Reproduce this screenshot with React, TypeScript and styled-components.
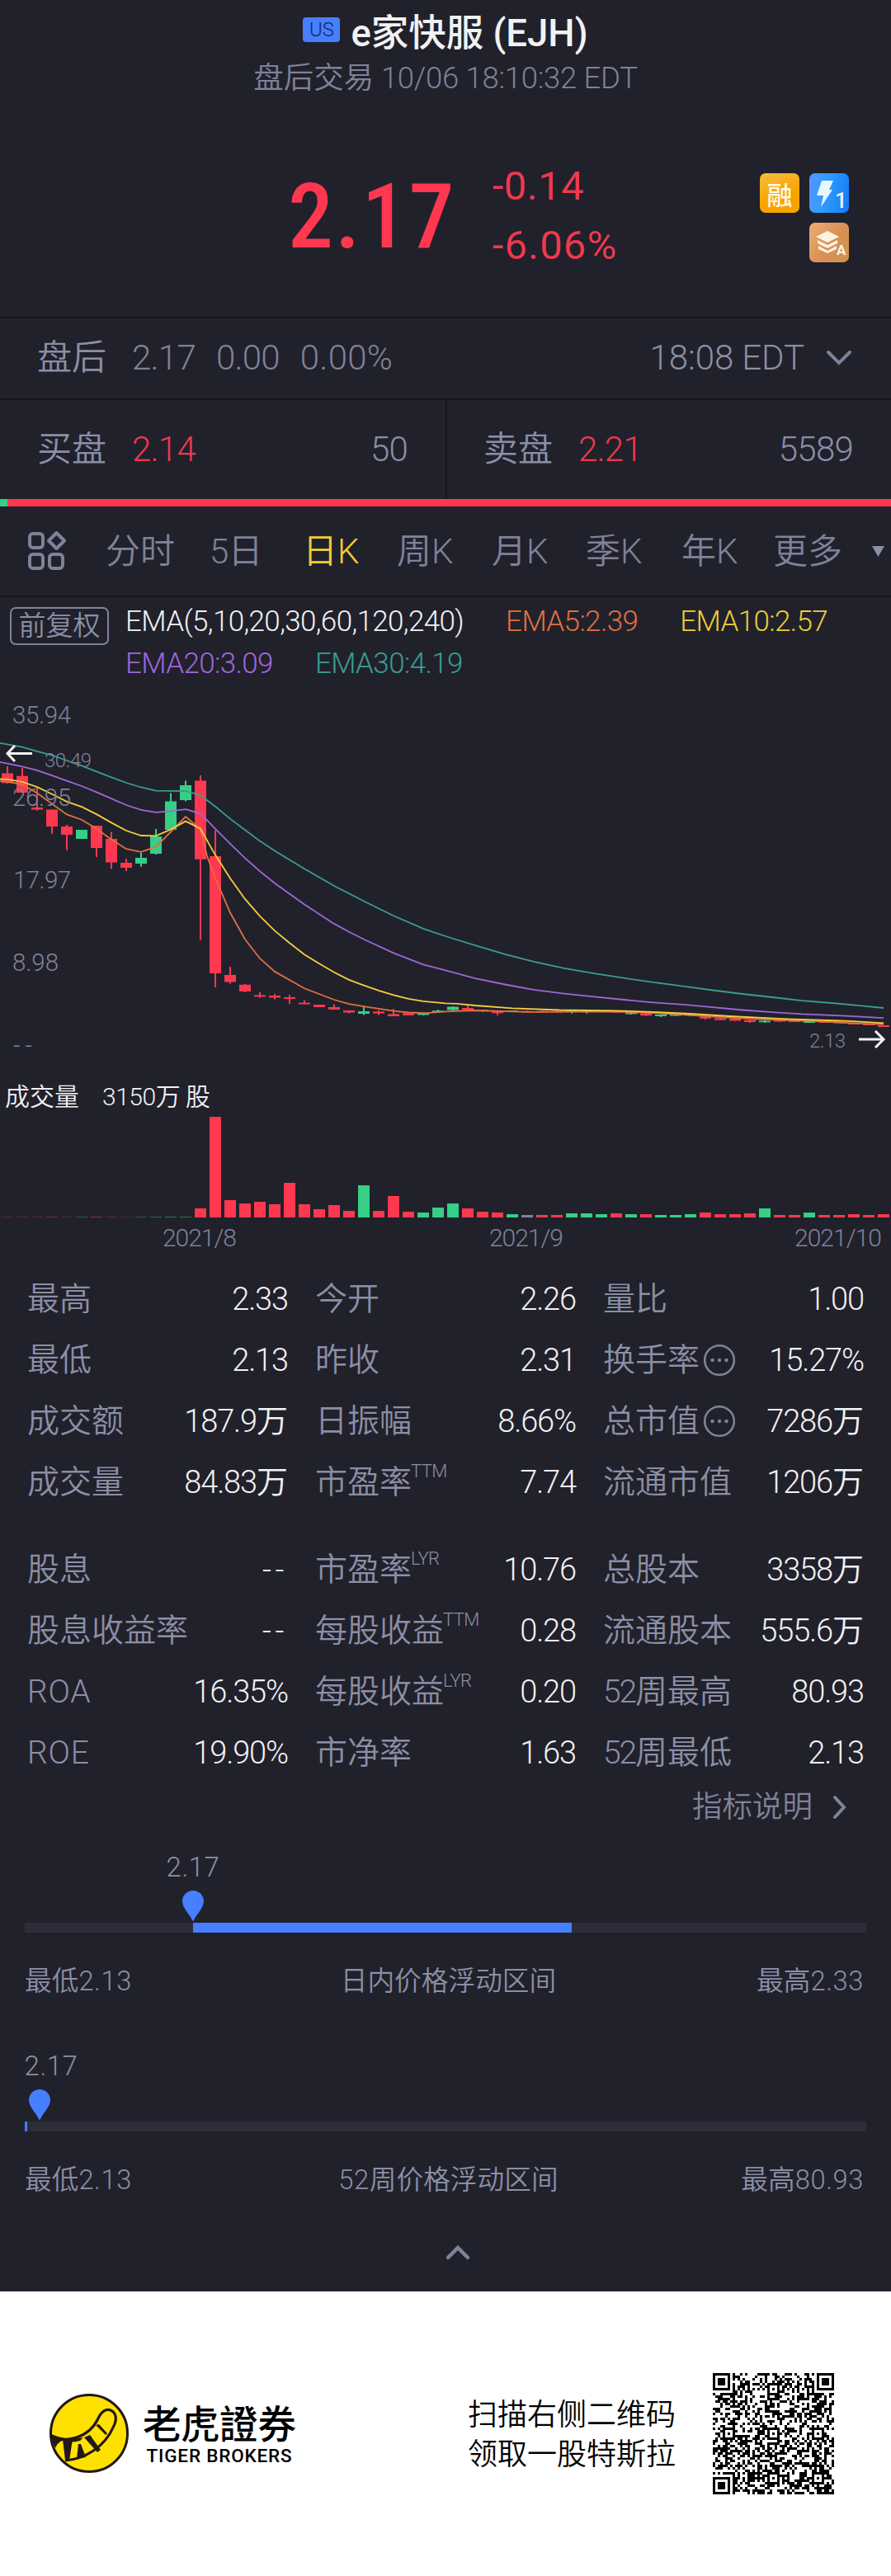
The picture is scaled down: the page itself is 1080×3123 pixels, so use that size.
import React from "react";
import styled, { createGlobalStyle } from "styled-components";

const color = {
  bg: "#21212b",
  line: "#15151d",
  track: "#2d2d3a",
  muted: "#7f8299",
  label: "#8b8fa6",
  white: "#f2f2f2",
  red: "#ff3850",
  redText: "#f0384e",
  green: "#35cf86",
  blue: "#467fff",
  yellow: "#f0cc38",
  orange: "#e07040",
  purple: "#a066d8",
  teal: "#3a9d90",
};

const GlobalStyle = createGlobalStyle`
  body {
    margin: 0;
    background: ${color.bg};
    font-family: Roboto, "Noto Sans CJK SC", sans-serif;
    font-weight: 350;
  }

  * {
    box-sizing: border-box;
  }
`;

const Page = styled.div`
  width: 1080px;
  color: ${color.label};
  white-space: nowrap;
`;

/* ---------- text ---------- */

const Cjk = styled.span`
  font-family: "Noto Sans CJK SC", sans-serif;
  line-height: 1;
`;

const Latin = styled.span<{ $track?: number }>`
  font-family: Roboto, sans-serif;
  letter-spacing: ${({ $track = -0.018 }) => $track}em;
`;

// Sets latin runs in Roboto and leaves everything else to the CJK face
function Mixed({ children, track }: { children: string; track?: number }) {
  return (
    <span>
      {children.split(/([\x20-\x7e]+)/).map((part, i) =>
        i % 2 ? (
          <Latin key={i} $track={track}>
            {part}
          </Latin>
        ) : (
          part && <Cjk key={i}>{part}</Cjk>
        )
      )}
    </span>
  );
}

/* ---------- header ---------- */

const Header = styled.header`
  height: 386px;
  border-bottom: 2px solid ${color.line};
`;

const TitleRow = styled.div`
  display: flex;
  align-items: center;
  justify-content: center;
  height: 70px;
  padding: 11px 0 0;
  gap: 13px;
`;

const Market = styled.span`
  display: flex;
  align-items: center;
  justify-content: center;
  width: 45px;
  height: 30px;
  margin-top: -10px;
  border-radius: 4px;
  background: ${color.blue};
  color: #16265c;
  font-size: 24px;
`;

const Title = styled.h1`
  margin: 0;
  color: ${color.white};
  font-size: 45.5px;
  font-weight: 500;
  line-height: 60px;
`;

const Subtitle = styled.div`
  height: 50px;
  line-height: 50px;
  text-align: center;
  font-size: 36.5px;
  color: ${color.muted};
`;

const Quote = styled.div`
  display: grid;
  grid-template-columns: 349px 248px 1fr 108px;
  align-items: start;
  height: 200px;
  padding: 90px 51px 0 0;
`;

const Price = styled.div`
  grid-column: 2;
  margin-top: 3px;
  color: ${color.red};
  font-size: 110px;
  font-weight: 500;
  font-stretch: 75%;
  line-height: 100px;
`;

const Change = styled.div`
  display: flex;
  flex-direction: column;
  margin-top: -20px;
  color: ${color.redText};
  font-size: 49px;
  font-weight: 400;
  line-height: 72px;
`;

const Badges = styled.div`
  display: flex;
  flex-wrap: wrap;
  justify-content: flex-end;
  gap: 12px;
`;

const Badge = styled.span<{ $fill: string }>`
  display: flex;
  align-items: center;
  justify-content: center;
  width: 48px;
  height: 48px;
  border-radius: 7px;
  background: ${({ $fill }) => $fill};
  color: #fffbe6;
  font-size: 31px;
  font-weight: 500;
  line-height: 48px;
`;

/* ---------- after hours + order book ---------- */

const AfterHours = styled.div`
  display: flex;
  align-items: center;
  height: 99px;
  padding: 0 47px 2px 45px;
  border-bottom: 2px solid ${color.line};
  font-size: 42px;
`;

const AfterValues = styled.div`
  display: flex;
  gap: 25px;
  margin-left: 31px;
  color: ${color.muted};
`;

const Clock = styled.div`
  display: flex;
  align-items: center;
  gap: 26px;
  margin-left: auto;
`;

const Book = styled.div`
  display: grid;
  grid-template-columns: 1fr 1fr;
  height: 120px;
`;

const Side = styled.div`
  display: flex;
  align-items: center;
  padding: 0 46px 2px 45px;
  font-size: 42px;

  & + & {
    padding-left: 44px;
    border-left: 2px solid ${color.line};
  }
`;

const SidePrice = styled.span`
  margin-left: 31px;
  color: ${color.redText};
`;

const SideSize = styled.span`
  margin-left: auto;
`;

const Ratio = styled.div`
  height: 9px;
  background: linear-gradient(90deg, ${color.green} 9px, ${color.red} 9px);
`;

/* ---------- tabs ---------- */

const Tabs = styled.nav`
  display: grid;
  grid-template-columns: 95px 126px 113px 114px 115px 114px 116px 111px 119px 1fr;
  align-items: center;
  height: 110px;
  padding-left: 33px;
  border-bottom: 2px solid ${color.line};
  color: ${color.muted};
  font-size: 42px;
`;

const Tab = styled.span<{ $active?: boolean }>`
  color: ${({ $active }) => ($active ? color.yellow : "inherit")};
`;

/* ---------- chart ---------- */

const Legend = styled.div`
  display: flex;
  height: 106px;
  padding: 4px 12px 0;
`;

const Adjust = styled.span`
  width: 120px;
  height: 46px;
  margin-top: 8px;
  border: 2px solid ${color.muted};
  border-radius: 7px;
  line-height: 41px;
  text-align: center;
  font-size: 33px;
`;

const LegendRows = styled.div`
  margin-left: 20px;
  font-size: 35px;
  line-height: 51px;
`;

const LegendRow = styled.div`
  display: flex;
  gap: 51px;
`;

const LegendItem = styled.span<{ $color: string }>`
  color: ${({ $color }) => $color};
`;

const Chart = styled.svg`
  display: block;
  font-family: Roboto, "Noto Sans CJK SC", sans-serif;
`;

/* ---------- stats ---------- */

const Stats = styled.section`
  display: grid;
  grid-template-columns: repeat(3, 316px);
  column-gap: 33px;
  grid-auto-rows: 74px;
  padding: 6px 0 0 33px;

  & + & {
    padding-top: 32px;
  }
`;

const Stat = styled.div`
  display: flex;
  align-items: center;
  justify-content: space-between;
  font-size: 39px;
`;

const StatName = styled.span`
  display: flex;
  align-items: center;
`;

const Sup = styled.span`
  align-self: flex-start;
  margin: -3px 0 0 -1px;
  font-size: 22px;
  letter-spacing: -0.03em;
  line-height: 26px;
`;

const StatValue = styled.span`
  color: ${color.white};
  font-size: 38px;
`;

const More = styled.div`
  display: flex;
  align-items: center;
  justify-content: flex-end;
  gap: 23px;
  height: 57px;
  padding-right: 53px;
  color: ${color.muted};
  font-size: 36.5px;
`;

/* ---------- price ranges ---------- */

const Range = styled.section`
  height: 241px;
  padding: 22px 30px 0;
`;

const RangeHead = styled.div<{ $left: number }>`
  display: flex;
  flex-direction: column;
  align-items: center;
  width: 64px;
  height: 90px;
  margin-left: ${({ $left }) => $left}px;
  font-size: 33px;
  line-height: 46px;
`;

const Pin = styled.svg<{ $shift?: number }>`
  display: block;
  width: 26px;
  height: 37px;
  margin: 5px 0 0 ${({ $shift = 0 }) => $shift}px;
`;

const Track = styled.div`
  height: 12px;
  background: ${color.track};
`;

const Fill = styled.div`
  height: 12px;
  background: ${color.blue};
`;

const RangeLabels = styled.div`
  display: grid;
  grid-template-columns: 1fr auto 1fr;
  margin-top: 36px;
  padding-right: 3px;
  font-size: 32.7px;
  line-height: 46px;

  & > :nth-child(2) {
    padding-left: 10px;
  }

  & > :last-child {
    text-align: right;
  }
`;

const Collapse = styled.div`
  display: flex;
  justify-content: center;
  height: 77px;
  padding: 20px 0 0 30px;
`;

/* ---------- footer ---------- */

const Footer = styled.footer`
  display: flex;
  align-items: center;
  height: 345px;
  padding: 0 69px 0 59px;
  background: #fff;
  color: #000;
`;

const Brand = styled.div`
  display: flex;
  flex-direction: column;
  align-items: center;
  margin: -6px 0 0 16px;
`;

const BrandName = styled.div`
  font-family: "Noto Sans CJK TC", sans-serif;
  font-size: 46.5px;
  font-weight: 500;
  line-height: 58px;
`;

const BrandLatin = styled.div`
  font-size: 22.5px;
  font-weight: 500;
  letter-spacing: 0.8px;
  line-height: 24px;
`;

const Invite = styled.p`
  margin: -5px 45px 0 auto;
  font-family: "Noto Sans CJK SC", sans-serif;
  font-size: 36px;
  line-height: 48px;
`;

/* ---------- data ---------- */

type Candle = [top: number, bottom: number, high: number, low: number, up?: 1];

const candles: Candle[] = [
  [937.5, 949.3, 929, 950],
  [940.8, 961, 931, 961],
  [979, 981.5, 955, 982.5],
  [981.5, 1002, 981.5, 1010.7],
  [1002, 1012, 1000, 1030.7],
  [1006, 1017, 1006, 1017, 1],
  [1001, 1028, 1001, 1039],
  [1017, 1045.5, 1008.5, 1053.3],
  [1046, 1052, 1041, 1056],
  [1040, 1047, 1033.7, 1050.7, 1],
  [1014, 1035, 1005, 1036, 1],
  [971.5, 1006, 961.5, 1006, 1],
  [952, 970, 946.4, 971.5, 1],
  [946.4, 1041.8, 940, 1139.8],
  [1038, 1180, 1006.7, 1197],
  [1182, 1190.5, 1172, 1192.5],
  [1193.8, 1202, 1193, 1203],
  [1206.4, 1208.3, 1203, 1209.7],
  [1207, 1209.5, 1205, 1211.6],
  [1209, 1211, 1206, 1217],
  [1215.7, 1217.5, 1212.7, 1217.5],
  [1218, 1221, 1218, 1221],
  [1221, 1224, 1217.5, 1224],
  [1225, 1227.5, 1225, 1228.5],
  [1226, 1229, 1220, 1230.5, 1],
  [1226.4, 1228.6, 1225, 1230.5],
  [1229.4, 1232, 1223, 1232],
  [1228.3, 1231, 1228, 1231],
  [1228.6, 1230.5, 1228, 1231, 1],
  [1225.3, 1227, 1224, 1228, 1],
  [1220.5, 1224.5, 1220, 1225, 1],
  [1222, 1224.5, 1219, 1225],
  [1224, 1226, 1224, 1227],
  [1226.4, 1228.3, 1226, 1231],
  [1225, 1227, 1225, 1227, 1],
  [1225.7, 1227.5, 1225, 1227],
  [1225.7, 1227.5, 1225, 1227],
  [1225.7, 1227.5, 1225, 1227],
  [1225, 1227, 1225, 1228.8, 1],
  [1225, 1227, 1225, 1228.8, 1],
  [1225, 1227, 1225, 1227, 1],
  [1225.5, 1227.5, 1225, 1227],
  [1227, 1229.4, 1227, 1230, 1],
  [1228.6, 1231.2, 1228, 1232],
  [1230, 1232, 1230, 1233, 1],
  [1229.5, 1231.5, 1229, 1232, 1],
  [1229.5, 1231.5, 1229, 1232, 1],
  [1232.3, 1234.8, 1231, 1236],
  [1234.5, 1236.6, 1234, 1237],
  [1235, 1237.5, 1234, 1237.5],
  [1236.7, 1239, 1236, 1240],
  [1237.5, 1239.3, 1237, 1240, 1],
  [1236.5, 1238.5, 1236, 1239],
  [1237, 1239, 1237, 1239],
  [1238, 1240, 1238, 1240, 1],
  [1238, 1240, 1238, 1240],
  [1238.5, 1240.5, 1238, 1240],
  [1240, 1242, 1240, 1242],
  [1241, 1243, 1241, 1243],
  [1243, 1245, 1243, 1245],
];

// bar heights, r = down, g = up, n = flat
const volumes =
  "r.5 r.6 r.6 r.8 r.5 g.7 r1 r.6 r.4 g.7 g.8 g1 g1 r11 r122 r21 r17 r19 r16 r42 r16 r10 r15 r8 g39 r8 r26 r7 g6 g12 g17 r11 r7 r6 g4 n3 r3 r3 g5 g5 g4 r5 g4 r4 g3 g3 g4 r6 r4 r4 r5 g11 r3 r3 g6 r3 r3 r4 r3 r4".split(
    " "
  );

const volumeColor: Record<string, string> = {
  r: color.red,
  g: color.green,
  n: color.muted,
};

const averages = [
  {
    stroke: color.teal,
    points:
      "0,900.9 27,905.7 45,910.9 63,915.7 81,922 99,928.3 117,935.3 135,942.3 153,949 171,954.5 189,958.6 225,959 243,964.1 261,977.8 279,992.6 297,1006.3 315,1019.6 333,1031.5 369,1053.3 405,1074 441,1092.5 477,1110.3 513,1125.8 540,1135 576,1146.1 612,1156.9 648,1166.1 684,1173.9 720,1180.2 756,1185.7 792,1190.9 828,1195.7 864,1200.5 900,1205 936,1209 972,1213.1 1008,1216 1044,1219.4 1071,1222",
  },
  {
    stroke: color.purple,
    points:
      "0,923.8 27,929.4 45,933.8 63,940.1 81,946.7 99,953 117,960.4 135,968.2 153,976 171,981.9 189,984.8 207,983.4 225,981.1 243,986.3 261,1004.8 279,1022.9 297,1040.3 315,1056.2 333,1070.7 369,1096.6 405,1119.9 423,1129.8 441,1138.7 477,1155.4 513,1169.4 540,1176.4 576,1186.1 612,1193.5 648,1200.1 684,1204.6 720,1208.3 756,1212 792,1215.3 828,1217.9 864,1221.2 900,1224.5 936,1227.1 972,1229.4 1008,1230.8 1044,1232.7 1071,1234.2",
  },
  {
    stroke: color.orange,
    points:
      "0,947.1 9,947.5 27,951.2 45,961.5 63,974.5 81,987.4 99,993.7 117,1004.8 135,1017.8 153,1029.2 171,1032.9 189,1026.6 207,1008.5 225,990 243,1005.6 251,1038 261,1064.7 279,1106.5 297,1138.7 315,1162 333,1177.9 369,1198.3 405,1212 423,1217.1 441,1220.1 477,1225.7 495,1227.5 517,1228.2 540,1226.4 574,1225 643,1226.8 747,1226.4 792,1228.2 828,1230 864,1232.7 919,1235.6 988,1238.2 1044,1240.8 1071,1241.9",
  },
  {
    stroke: "#f5cd40",
    points:
      "0,944.5 9,944.9 27,947.9 45,954.1 63,962.7 81,971.9 99,978.2 117,987.1 135,997.4 153,1007 171,1013 189,1013.3 207,1005.6 225,995.6 243,1004.8 261,1036.6 279,1064.7 297,1089.9 315,1110.6 333,1128.4 351,1143.2 369,1157.2 387,1168.3 405,1178.7 423,1187.9 441,1194.6 459,1200.9 477,1206.4 495,1210.9 513,1213.8 540,1216.4 554,1216.8 576,1219 621,1222.3 678,1224.5 747,1225.3 792,1226.8 836,1229 884,1232 953,1235.3 1029,1237.9 1071,1240.4",
  },
];

const axis = [
  { text: "35.94", x: 15, y: 877, w: 71 },
  { text: "26.95", x: 15, y: 977, w: 71 },
  { text: "17.97", x: 16, y: 1077, w: 70 },
  { text: "8.98", x: 15, y: 1177, w: 56 },
];

const months = [
  { text: "2021/8", x: 197, w: 90 },
  { text: "2021/9", x: 593, w: 90 },
  { text: "2021/10", x: 963, w: 106 },
];

type StatRow = { name: string; value: string; sup?: string; info?: boolean };

const daily: StatRow[] = [
  { name: "最高", value: "2.33" },
  { name: "今开", value: "2.26" },
  { name: "量比", value: "1.00" },
  { name: "最低", value: "2.13" },
  { name: "昨收", value: "2.31" },
  { name: "换手率", value: "15.27%", info: true },
  { name: "成交额", value: "187.9万" },
  { name: "日振幅", value: "8.66%" },
  { name: "总市值", value: "7286万", info: true },
  { name: "成交量", value: "84.83万" },
  { name: "市盈率", value: "7.74", sup: "TTM" },
  { name: "流通市值", value: "1206万" },
];

const fundamentals: StatRow[] = [
  { name: "股息", value: "--" },
  { name: "市盈率", value: "10.76", sup: "LYR" },
  { name: "总股本", value: "3358万" },
  { name: "股息收益率", value: "--" },
  { name: "每股收益", value: "0.28", sup: "TTM" },
  { name: "流通股本", value: "555.6万" },
  { name: "ROA", value: "16.35%" },
  { name: "每股收益", value: "0.20", sup: "LYR" },
  { name: "52周最高", value: "80.93" },
  { name: "ROE", value: "19.90%" },
  { name: "市净率", value: "1.63" },
  { name: "52周最低", value: "2.13" },
];

const tabs = ["分时", "5日", "日K", "周K", "月K", "季K", "年K", "更多"];

/* ---------- pieces ---------- */

function Chevron({ d, w, h, stroke = 4 }: { d: string; w: number; h: number; stroke?: number }) {
  return (
    <svg width={w} height={h} fill="none" stroke={color.muted} strokeWidth={stroke} strokeLinecap="round">
      <path d={d} />
    </svg>
  );
}

const InfoIcon = styled.svg`
  width: 40px;
  height: 40px;
  margin-left: 4px;
`;

function InfoDots() {
  return (
    <InfoIcon viewBox="0 0 40 40">
      <circle cx="20" cy="20" r="17.8" fill="none" stroke={color.muted} strokeWidth="2.6" />
      <g fill={color.muted}>
        <circle cx="11.5" cy="20" r="2.2" />
        <circle cx="20" cy="20" r="2.2" />
        <circle cx="28.5" cy="20" r="2.2" />
      </g>
    </InfoIcon>
  );
}

function StatGrid({ rows }: { rows: StatRow[] }) {
  return (
    <Stats>
      {rows.map((row) => (
        <Stat key={row.name + (row.sup ?? "")}>
          <StatName>
            <Mixed track={/^[A-Z]+$/.test(row.name) ? 0.02 : -0.055}>{row.name}</Mixed>
            {row.sup && <Sup>{row.sup}</Sup>}
            {row.info && <InfoDots />}
          </StatName>
          <StatValue>
            <Mixed track={row.value === "--" ? 0.12 : -0.03}>{row.value}</Mixed>
          </StatValue>
        </Stat>
      ))}
    </Stats>
  );
}

function PriceChart() {
  return (
    <Chart width="1080" height="702" viewBox="0 830 1080 702">
      {candles.map(([top, bottom, high, low, up], i) => (
        <g key={i} fill={up ? color.green : color.red}>
          <rect x={2 + i * 18} y={top} width="14" height={bottom - top} />
          <rect x={8 + i * 18} y={high} width="2" height={low - high} />
        </g>
      ))}
      {averages.map((line) => (
        <polyline
          key={line.stroke}
          points={line.points}
          fill="none"
          stroke={line.stroke}
          strokeWidth="1.8"
        />
      ))}
      <g fill={color.muted} fontSize="29.5">
        {axis.map((a) => (
          <text key={a.text} x={a.x} y={a.y} textLength={a.w}>
            {a.text}
          </text>
        ))}
        <text x="16" y="1278" textLength="23">
          --
        </text>
        <text x="54" y="930" fontSize="24" textLength="57">
          30.49
        </text>
        <text x="981" y="1270" fontSize="24" textLength="44">
          2.13
        </text>
      </g>
      <g fill="none" stroke={color.white} strokeWidth="3">
        <path d="M39 913.5H9M18 904L9 913.5L18 923" />
        <path d="M1041 1260H1071M1061 1250L1071 1260L1061 1270" />
      </g>
      <g fill={color.white} fontSize="30">
        <text x="6" y="1340">
          成交量
        </text>
        <text x="124" y="1340" textLength="131">
          3150万 股
        </text>
      </g>
      {volumes.map((v, i) => {
        const h = Number(v.slice(1));
        return (
          <rect
            key={i}
            x={2 + i * 18}
            y={1476 - h}
            width="14"
            height={h}
            fill={volumeColor[v[0]]}
            opacity={i < 13 ? 0.5 : 1}
          />
        );
      })}
      <g fill={color.muted} fontSize="30">
        {months.map((m) => (
          <text key={m.text} x={m.x} y="1511" textLength={m.w}>
            {m.text}
          </text>
        ))}
      </g>
    </Chart>
  );
}

interface PriceRangeProps {
  now: string;
  low: string;
  high: string;
  title: string;
  headLeft: number;
  pinShift?: number;
  from: number;
  to: number;
}

function PriceRange({ now, low, high, title, headLeft, pinShift, from, to }: PriceRangeProps) {
  return (
    <Range>
      <RangeHead $left={headLeft}>
        <Latin $track={0.015}>{now}</Latin>
        <Pin viewBox="0 0 26 37" $shift={pinShift}>
          <path
            d="M13 0C5.800 0 0 5.800 0 13C0 21 9 29 12 36Q13 38 14 36C17 29 26 21 26 13C26 5.800 20.200 0 13 0Z"
            fill={color.blue}
          />
        </Pin>
      </RangeHead>
      <Track>
        <Fill style={{ marginLeft: from, width: to - from }} />
      </Track>
      <RangeLabels>
        <Mixed track={0.018}>{low}</Mixed>
        <Mixed track={0.018}>{title}</Mixed>
        <Mixed track={0.018}>{high}</Mixed>
      </RangeLabels>
    </Range>
  );
}

const QR_SIZE = 49;

function qrPath() {
  const ring = (x: number, y: number, cx: number, cy: number) =>
    Math.max(Math.abs(x - cx), Math.abs(y - cy));
  const last = QR_SIZE - 4;
  let seed = 20211006;
  let d = "";
  for (let y = 0; y < QR_SIZE; y++) {
    for (let x = 0; x < QR_SIZE; x++) {
      seed = (seed * 1103515245 + 12345) % 2147483648;
      let dark = (seed >> 16) % 2 === 0;
      if (x === 6 || y === 6) dark = (x + y) % 2 === 0;
      for (const cx of [6, 24, 42]) {
        for (const cy of [6, 24, 42]) {
          const r = ring(x, y, cx, cy);
          if (r <= 2) dark = r !== 1;
        }
      }
      for (const [cx, cy] of [[3, 3], [last, 3], [3, last]]) {
        const r = ring(x, y, cx, cy);
        if (r <= 4) dark = r !== 2 && r !== 4;
      }
      if (dark) d += `M${x} ${y}h1v1h-1z`;
    }
  }
  return d;
}

function TigerLogo() {
  return (
    <svg width="98" height="98" viewBox="0 1 98 98">
      <circle cx="49" cy="49" r="46.500" fill="#ffe100" stroke="#231815" strokeWidth="3" />
      <path
        d="M3 52C22 62 49 54 60 31C64 22 70 19 75 21C82 24 83 32 79 40C68 66 44 80 20 82"
        fill="none"
        stroke="#231815"
        strokeWidth="3.200"
      />
      <g fill="#231815">
        <path d="M3 50Q24 59 42 54L38 58Q26 61 16 58Q10 61 8 67Q4 60 3 50Z" />
        <path d="M17 56H29L25 82H20Z" />
        <path d="M36 62H39L45 78L34 80Z" />
        <path d="M43 54L50 51L63 69L59 72Z" />
        <path d="M57 39L61 38L71 49L69 51Z" />
      </g>
    </svg>
  );
}

/* ---------- app ---------- */

function App() {
  return (
    <Page>
      <GlobalStyle />
      <Header>
        <TitleRow>
          <Market>US</Market>
          <Title>
            <Mixed track={0}>e家快服 (EJH)</Mixed>
          </Title>
        </TitleRow>
        <Subtitle>
          <Mixed track={-0.008}>盘后交易 10/06 18:10:32 EDT</Mixed>
        </Subtitle>
        <Quote>
          <Price>
            <Latin $track={0.018}>2.17</Latin>
          </Price>
          <Change>
            <Latin $track={0.01}>-0.14</Latin>
            <Latin $track={0.023}>-6.06%</Latin>
          </Change>
          <Badges>
            <Badge $fill="linear-gradient(160deg, #f5bd3c, #f8a300 60%)">
              <Cjk>融</Cjk>
            </Badge>
            <Badge $fill="linear-gradient(100deg, #5b94ff, #2f9dff 40%, #147bf5)">
              <svg width="48" height="48" viewBox="0 0 48 48">
                <path d="M15 9H29L24 20H28L14 41L17 27H9Z" fill="#e8f6ff" />
                <text x="31" y="42" fontSize="26" fontWeight="500" fill="#e8f6ff">
                  1
                </text>
              </svg>
            </Badge>
            <Badge $fill="linear-gradient(125deg, #e8b070, #d98f58 55%, #cc9548)">
              <svg width="48" height="48" viewBox="0 0 48 48">
                <g fill="#fff3e0">
                  <path d="M22 10L36 17L22 24L8 17Z" />
                  <path d="M10 21L22 27L34 21V25L22 31L10 25Z" />
                  <path d="M11 28L22 34L33 28V32L22 37L11 32Z" />
                </g>
                <text x="33" y="39" fontSize="17" fontWeight="700" fill="#fff3e0">
                  A
                </text>
              </svg>
            </Badge>
          </Badges>
        </Quote>
      </Header>

      <AfterHours>
        <Mixed>盘后</Mixed>
        <AfterValues>
          <Latin>2.17</Latin>
          <Latin>0.00</Latin>
          <Latin $track={0.005}>0.00%</Latin>
        </AfterValues>
        <Clock>
          <Latin $track={-0.002}>18:08 EDT</Latin>
          <Chevron w={32} h={20} d="M3 3L16 16L29 3" />
        </Clock>
      </AfterHours>

      <Book>
        <Side>
          <Mixed>买盘</Mixed>
          <SidePrice>
            <Latin>2.14</Latin>
          </SidePrice>
          <SideSize>
            <Latin>50</Latin>
          </SideSize>
        </Side>
        <Side>
          <Mixed>卖盘</Mixed>
          <SidePrice>
            <Latin>2.21</Latin>
          </SidePrice>
          <SideSize>
            <Latin>5589</Latin>
          </SideSize>
        </Side>
      </Book>
      <Ratio />

      <Tabs>
        <svg width="48" height="48" fill="none" stroke={color.muted} strokeWidth="4">
          <rect x="3" y="3" width="16" height="17" rx="4" />
          <rect x="3" y="28" width="16" height="17" rx="4" />
          <rect x="27" y="28" width="16" height="17" rx="4" />
          <path d="M35.500 2L45 11.500L35.500 21L26 11.500Z" strokeLinejoin="round" />
        </svg>
        {tabs.map((tab) => (
          <Tab key={tab} $active={tab === "日K"}>
            <Mixed>{tab}</Mixed>
          </Tab>
        ))}
        <svg width="17" height="14">
          <path d="M1 1H16L8.500 14Z" fill={color.label} />
        </svg>
      </Tabs>

      <Legend>
        <Adjust>
          <Cjk>前复权</Cjk>
        </Adjust>
        <LegendRows>
          <LegendRow>
            <LegendItem $color={color.white}>
              <Latin>EMA(5,10,20,30,60,120,240)</Latin>
            </LegendItem>
            <LegendItem $color={color.orange}>
              <Latin>EMA5:2.39</Latin>
            </LegendItem>
            <LegendItem $color={color.yellow}>
              <Latin>EMA10:2.57</Latin>
            </LegendItem>
          </LegendRow>
          <LegendRow>
            <LegendItem $color={color.purple}>
              <Latin>EMA20:3.09</Latin>
            </LegendItem>
            <LegendItem $color={color.teal}>
              <Latin>EMA30:4.19</Latin>
            </LegendItem>
          </LegendRow>
        </LegendRows>
      </Legend>
      <PriceChart />

      <StatGrid rows={daily} />
      <StatGrid rows={fundamentals} />
      <More>
        <Mixed>指标说明</Mixed>
        <Chevron w={19} h={30} d="M4 3L15 15L4 27" />
      </More>

      <PriceRange
        now="2.17"
        low="最低2.13"
        high="最高2.33"
        title="日内价格浮动区间"
        headLeft={172}
        from={204}
        to={663}
      />
      <PriceRange
        now="2.17"
        low="最低2.13"
        high="最高80.93"
        title="52周价格浮动区间"
        headLeft={0}
        pinShift={-28}
        from={0}
        to={3}
      />
      <Collapse>
        <Chevron w={32} h={20} d="M4 16L16 4L28 16" stroke={4.5} />
      </Collapse>

      <Footer>
        <TigerLogo />
        <Brand>
          <BrandName>老虎證券</BrandName>
          <BrandLatin>TIGER BROKERS</BrandLatin>
        </Brand>
        <Invite>
          扫描右侧二维码
          <br />
          领取一股特斯拉
        </Invite>
        <svg width="147" height="147" viewBox={`0 0 ${QR_SIZE} ${QR_SIZE}`} shapeRendering="crispEdges">
          <path d={qrPath()} />
        </svg>
      </Footer>
    </Page>
  );
}

export default App;
